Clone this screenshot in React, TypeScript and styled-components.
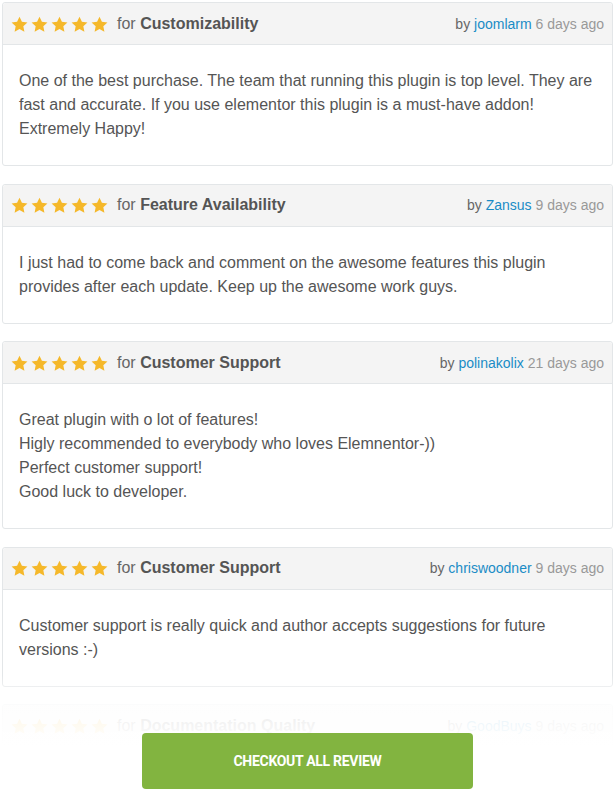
import React from "react";
import styled, { createGlobalStyle } from "styled-components";

const Global = createGlobalStyle`
  html, body { margin: 0; padding: 0; background: #fff; }
  body { font-family: "Liberation Sans", Arial, sans-serif; }
`;

const Page = styled.div`
  position: relative;
  height: 800px;
  overflow: hidden;
  padding: 2px;
  box-sizing: border-box;
`;

const List = styled.div`
  display: flex;
  flex-direction: column;
  gap: 17.5px;
`;

const Card = styled.div`
  border: 1px solid #e3e6e8;
  border-radius: 3px;
  background: #fff;
`;

const Header = styled.div`
  display: flex;
  align-items: center;
  justify-content: space-between;
  height: 41px;
  padding: 0 8px;
  background: #f4f4f4;
  border-bottom: 1px solid #e3e6e8;
  border-radius: 3px 3px 0 0;
`;

const Left = styled.div`
  display: flex;
  align-items: center;
  gap: 9px;
`;

const Stars = styled.div`
  display: flex;
  gap: 3px;
  padding-top: 1px;
`;

const Category = styled.span`
  font-size: 16px;
  color: #666;
  b { color: #555; font-weight: 700; }
`;

const Meta = styled.span`
  font-size: 14px;
  color: #999;
  span.by { color: #666; }
  a { color: #1a8cc6; text-decoration: none; }
`;

const Body = styled.div`
  padding: 24px 12px 24px 16px;
  font-size: 16px;
  line-height: 24px;
  color: #555;
`;

const Fade = styled.div`
  position: absolute;
  left: 0;
  right: 0;
  bottom: 0;
  height: 125px;
  background: linear-gradient(
    to bottom,
    rgba(255, 255, 255, 0) 0px,
    rgba(255, 255, 255, 0.86) 26px,
    rgba(255, 255, 255, 0.93) 48px,
    #fff 72px
  );
  display: flex;
  justify-content: center;
  align-items: flex-end;
  padding-bottom: 11px;
  box-sizing: border-box;
`;

const Button = styled.a`
  display: flex;
  align-items: center;
  justify-content: center;
  width: 331px;
  height: 56px;
  background: #82b440;
  border-radius: 4px;
  color: #fff;
  font-family: Roboto, "Liberation Sans", sans-serif;
  font-weight: 700;
  font-size: 14px;
  letter-spacing: -0.3px;
  text-transform: uppercase;
  text-decoration: none;
`;

const Star = () => (
  <svg width="17" height="17" viewBox="0 0 24 24">
    <path
      d="M12 1l3.4 7.2 7.8.9-5.8 5.4 1.5 7.8L12 18.4l-6.9 3.9 1.5-7.8L0.8 9.1l7.8-.9z"
      fill="#f5b82a"
    />
  </svg>
);

type Review = { cat: string; user: string; ago: string; lines: string[] };

const reviews: Review[] = [
  {
    cat: "Customizability",
    user: "joomlarm",
    ago: "6 days ago",
    lines: [
      "One of the best purchase. The team that running this plugin is top level. They are fast and accurate. If you use elementor this plugin is a must-have addon! Extremely Happy!",
    ],
  },
  {
    cat: "Feature Availability",
    user: "Zansus",
    ago: "9 days ago",
    lines: [
      "I just had to come back and comment on the awesome features this plugin provides after each update. Keep up the awesome work guys.",
    ],
  },
  {
    cat: "Customer Support",
    user: "polinakolix",
    ago: "21 days ago",
    lines: [
      "Great plugin with o lot of features!",
      "Higly recommended to everybody who loves Elemnentor-))",
      "Perfect customer support!",
      "Good luck to developer.",
    ],
  },
  {
    cat: "Customer Support",
    user: "chriswoodner",
    ago: "9 days ago",
    lines: [
      "Customer support is really quick and author accepts suggestions for future versions :-)",
    ],
  },
  {
    cat: "Documentation Quality",
    user: "GoodBuys",
    ago: "9 days ago",
    lines: ["Great documentation and very helpful support team."],
  },
];

const Text = styled.p`
  margin: 0;
`;

export default function App() {
  return (
    <>
      <Global />
      <Page>
        <List>
          {reviews.map((r, i) => (
            <Card key={i}>
              <Header>
                <Left>
                  <Stars>
                    {[0, 1, 2, 3, 4].map((s) => (
                      <Star key={s} />
                    ))}
                  </Stars>
                  <Category>
                    for <b>{r.cat}</b>
                  </Category>
                </Left>
                <Meta>
                  <span className="by">by</span> <a href="#">{r.user}</a> {r.ago}
                </Meta>
              </Header>
              <Body>
                {r.lines.map((l, j) => (
                  <Text key={j}>{l}</Text>
                ))}
              </Body>
            </Card>
          ))}
        </List>
        <Fade>
          <Button href="#">Checkout all review</Button>
        </Fade>
      </Page>
    </>
  );
}
